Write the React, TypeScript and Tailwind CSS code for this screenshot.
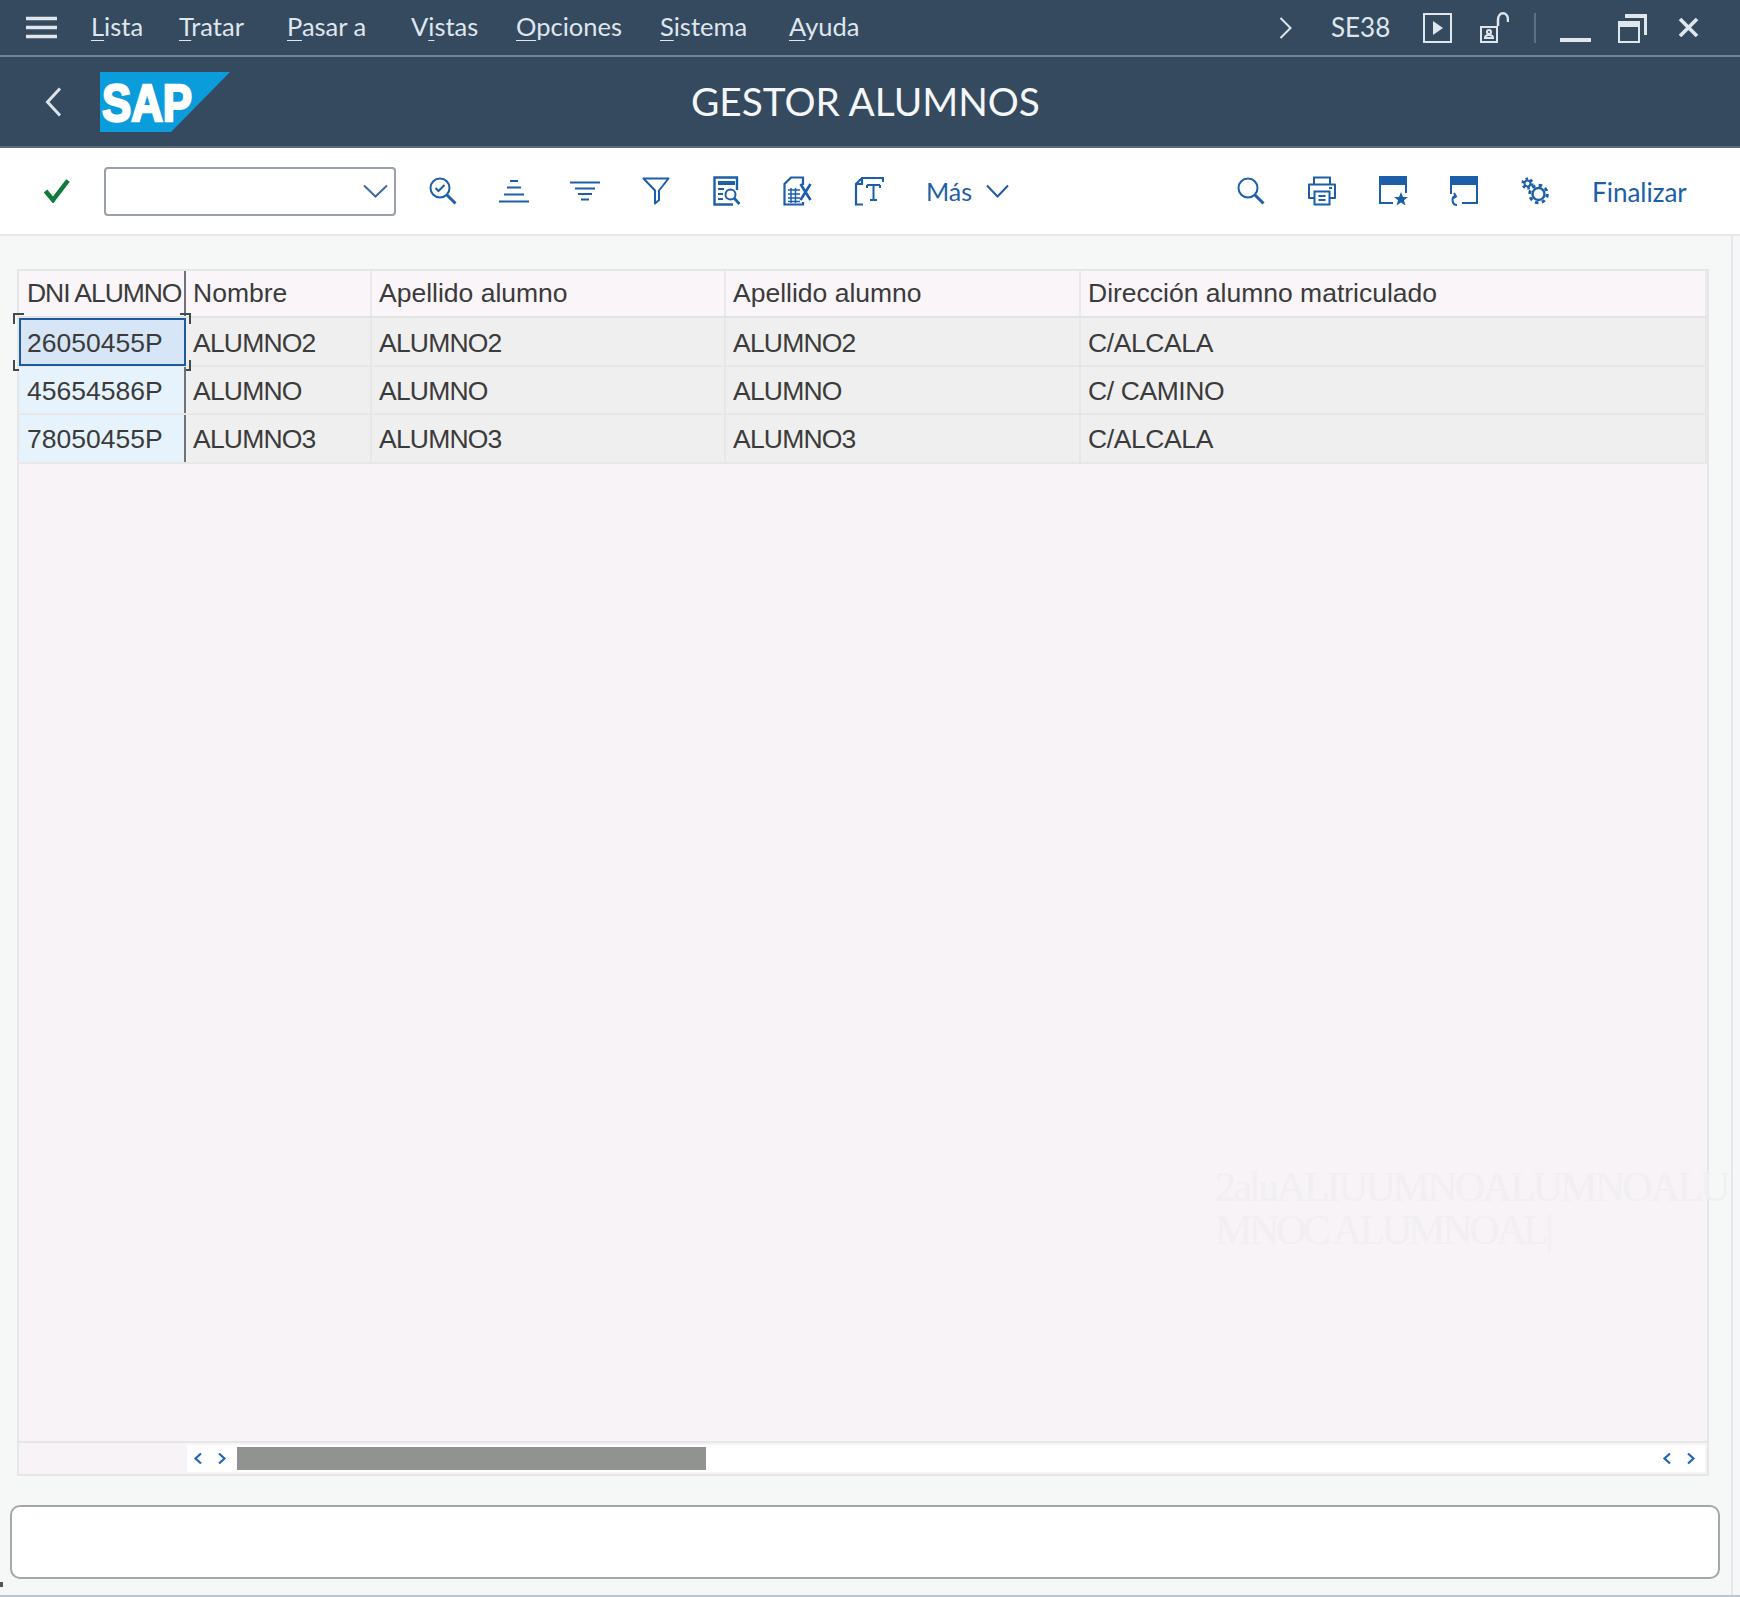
import React from "react";

const sans = "font-[Liberation_Sans,Arial,sans-serif]";
const ui = "font-[Lato,sans-serif]";

function Ico({ w, h, sw = 2, children }: { w: number; h: number; sw?: number; children: React.ReactNode }) {
  return (
    <svg width={w} height={h} viewBox={`0 0 ${w} ${h}`} fill="none" stroke="currentColor" strokeWidth={sw}>
      {children}
    </svg>
  );
}

const toolIcons: React.ReactNode[] = [
  <Ico w={28} h={28} key="a">
    <circle cx="11" cy="11" r="9.5" />
    <path d="M6.5 11l3 3 6-6" />
    <path d="M18 18l8.5 8.5" strokeWidth="3" />
  </Ico>,
  <Ico w={30} h={24} key="b">
    <path d="M11 2h8M8 8.500h14M5 15.500h20M0 22.500h30" />
  </Ico>,
  <Ico w={30} h={20} key="c">
    <path d="M0 1.500h30M5 7.500h20M8 13h14M11 18.500h8" />
  </Ico>,
  <Ico w={28} h={28} key="d">
    <path d="M1.500 1.500h25L17 13.500V23l-4 3.500v-13z" strokeLinejoin="round" />
  </Ico>,
  <Ico w={28} h={30} key="e">
    <path d="M24 14V1.500H1.500v27H20" strokeWidth="2.400" />
    <path d="M5 7h17" strokeWidth="4" />
    <path d="M5 13h6M5 18h5M5 23h5" />
    <circle cx="17.500" cy="18.500" r="5" />
    <path d="M21 22l5.500 6" strokeWidth="2.600" />
  </Ico>,
  <Ico w={29} h={30} key="f">
    <path d="M20 9V1.500H8L1.500 8v20.500H20V26" strokeWidth="2.200" />
    <path d="M5 14h12M5 18h12M5 22h12M5 25.500h12M8 12v15M12.500 12v15" strokeWidth="1.500" />
    <path d="M17.500 8l10 16M27.500 8l-10 16" strokeWidth="2.600" />
  </Ico>,
  <Ico w={30} h={30} key="g">
    <path d="M8 2v6H2M29 6V2H8L2 8v20.500h7" strokeWidth="2.200" />
    <path d="M13 9h13M19.500 9v15M16 24h7M13 9v3M26 9v3" />
  </Ico>,
];

const rightIcons: React.ReactNode[] = [
  <Ico w={28} h={28} key="a">
    <circle cx="11" cy="11" r="9.5" />
    <path d="M18 18l8.500 8.500" strokeWidth="3" />
  </Ico>,
  <Ico w={30} h={30} key="b">
    <path d="M7 8V1.500h16V8" />
    <path d="M7 22H2V8.500h26V22h-5" strokeLinejoin="round" />
    <path d="M7.500 15.500h15v13h-15z" />
    <path d="M11.500 20h7M11.500 24h7" />
    <path d="M22 12h3" />
  </Ico>,
  <Ico w={30} h={30} key="c">
    <path d="M2 1h26v7H2z" fill="currentColor" />
    <path d="M2 8v19h13M28 8v9" />
    <path d="M23 16l2 5h5l-4 3.300 1.500 5.200-4.500-3-4.500 3 1.500-5.200-4-3.300h5z" fill="currentColor" stroke="none" />
  </Ico>,
  <Ico w={30} h={30} key="d">
    <path d="M2 1h26v7H2z" fill="currentColor" />
    <path d="M2 8v10M28 8v19H13" />
    <path d="M8 29c-5 0-6-7-2-9M5 17l2 3.500-3 2" />
  </Ico>,
  <Ico w={30} h={28} key="e">
    <circle cx="7.500" cy="6.500" r="3" />
    <circle cx="7.500" cy="6.500" r="4.800" strokeWidth="2.600" strokeDasharray="2.500 2.500" />
    <circle cx="18.500" cy="17" r="6" strokeWidth="2.400" />
    <circle cx="18.500" cy="17" r="8.800" strokeWidth="3" strokeDasharray="3.500 3.400" />
  </Ico>,
];

const menus: [string, string, string, string][] = [
  ["", "L", "ista", "w-[88px]"],
  ["", "T", "ratar", "w-[108px]"],
  ["", "P", "asar a", "w-[124px]"],
  ["V", "i", "stas", "w-[105px]"],
  ["", "O", "pciones", "w-[144px]"],
  ["", "S", "istema", "w-[129px]"],
  ["", "A", "yuda", "w-[80px]"],
];

const rows = [
  ["26050455P", "ALUMNO2", "ALUMNO2", "ALUMNO2", "C/ALCALA"],
  ["45654586P", "ALUMNO", "ALUMNO", "ALUMNO", "C/ CAMINO"],
  ["78050455P", "ALUMNO3", "ALUMNO3", "ALUMNO3", "C/ALCALA"],
];
const headers = ["DNI ALUMNO", "Nombre", "Apellido alumno", "Apellido alumno", "Dirección alumno matriculado"];
const cols = "grid grid-cols-[167px_186px_354px_355px_1fr]";

function Marks() {
  const base = "absolute w-[11px] h-[11px] border-[#3f4a55]";
  return (
    <>
      <span className={`${base} -left-[8px] -top-[7px] border-l-2 border-t-2`} />
      <span className={`${base} -right-[7px] -top-[7px] border-r-2 border-t-2`} />
      <span className={`${base} -left-[8px] -bottom-[7px] border-l-2 border-b-2`} />
      <span className={`${base} -right-[7px] -bottom-[7px] border-r-2 border-b-2`} />
    </>
  );
}

function Arrow({ dir }: { dir: "l" | "r" }) {
  return (
    <span className="flex h-[23px] w-[22px] items-center justify-center bg-white text-[#1f66b5]">
      <Ico w={10} h={13} sw={2.200}>
        <path d={dir === "l" ? "M8 1.500L2.500 6.500 8 11.500" : "M2 1.500l5.500 5L2 11.500"} />
      </Ico>
    </span>
  );
}

export default function App() {
  return (
    <div className={`${sans} relative flex h-[1597px] w-[1740px] flex-col overflow-hidden bg-[#f6f7f7]`}>
      {/* menu bar */}
      <div className="flex h-[57px] shrink-0 items-center border-b-2 border-[#6e8299] bg-[#354a5f] pl-[26px] text-[25.500px] text-[#dfe6ee]">
        <Ico w={31} h={23} sw={3.500}>
          <path d="M0 2.500h31M0 11.500h31M0 20.500h31" />
        </Ico>
        <div className={`ml-[34px] flex pb-[3px] ${ui}`}>
          {menus.map(([pre, u, post, w]) => (
            <span key={u + post} className={w}>
              {pre}
              <span className="underline underline-offset-4 decoration-1">{u}</span>
              {post}
            </span>
          ))}
        </div>
        <div className="ml-auto flex items-center pr-[41px]">
          <Ico w={13} h={22}>
            <path d="M1.500 1l10 10-10 10" />
          </Ico>
          <span className={`ml-[39px] w-[62px] text-[26px] ${ui}`}>SE38</span>
          <span className="ml-[30px]">
            <Ico w={29} h={30}>
              <path d="M1 1h27v28H1z" />
              <path d="M10 8l10 7-10 7z" fill="currentColor" stroke="none" />
            </Ico>
          </span>
          <span className="ml-[27px]">
            <Ico w={30} h={31}>
              <path d="M2 15h16v15H2z" />
              <path d="M19 14V8c0-9 10-9 10 0v2" strokeWidth="2.500" />
              <circle cx="10" cy="20" r="2" />
              <path d="M6 26c0-4 8-4 8 0z" />
            </Ico>
          </span>
          <span className="ml-[25px] h-[30px] w-[2px] bg-[#5d7186]" />
          <span className="ml-[24px] mt-[25px]">
            <Ico w={31} h={4} sw={4}>
              <path d="M0 2h31" />
            </Ico>
          </span>
          <span className="ml-[27px]">
            <Ico w={29} h={30}>
              <path d="M1 9h20v20H1z" />
              <path d="M1 12h20" strokeWidth="4" />
              <path d="M7 3h21v19" strokeWidth="4" />
            </Ico>
          </span>
          <span className="ml-[31px]">
            <Ico w={21} h={19} sw={3.600}>
              <path d="M2 1l17 17M19 1L2 18" />
            </Ico>
          </span>
        </div>
      </div>

      {/* title bar */}
      <div className="relative flex h-[91px] shrink-0 items-center border-b-2 border-[#5e6a76] bg-[#354a5f] pl-[45px]">
        <span className="text-[#dbe3ec]">
          <Ico w={17} h={30} sw={3}>
            <path d="M15 1.500L2.500 15 15 28.500" />
          </Ico>
        </span>
        <svg width="130" height="60" viewBox="0 0 130 60" className="ml-[38px]">
          <path d="M0 0h130L71 60H0z" fill="#0b9cdc" />
          <text
            x="2"
            y="49"
            fontFamily="'Liberation Sans',Arial,sans-serif"
            fontWeight="700"
            fontSize="51"
            fill="#fff"
            stroke="#fff"
            strokeWidth="2.500"
            textLength="90"
            lengthAdjust="spacingAndGlyphs"
          >
            SAP
          </text>
        </svg>
        <span className={`ml-[461px] whitespace-nowrap ${ui} text-[38.800px] text-[#f4f6f8]`}>
          GESTOR ALUMNOS
        </span>
      </div>

      {/* toolbar */}
      <div className="flex h-[88px] shrink-0 items-center border-b-2 border-[#e7e8e9] bg-white pl-[44px] pr-[53px] text-[#1c5fa8]">
        <span className="text-[#0e7a3c]">
          <Ico w={26} h={24} sw={4.500}>
            <path d="M1.500 12l7.500 9L24 1.500" />
          </Ico>
        </span>
        <div className="ml-[34px] flex h-[49px] w-[292px] items-center justify-end rounded-[4px] border-2 border-[#9aa0a7] bg-white pr-[6px] text-[#3f6d9e]">
          <Ico w={25} h={14}>
            <path d="M1 1.500L12.500 12.500 24 1.500" />
          </Ico>
        </div>
        <div className="ml-[11px] flex">
          {toolIcons.map((icon, i) => (
            <span key={i} className="flex h-[48px] w-[71px] items-center justify-center">
              {icon}
            </span>
          ))}
        </div>
        <span className={`ml-[22px] w-[48px] pt-[2px] ${ui} text-[25px]`}>Más</span>
        <span className="ml-[12px]">
          <Ico w={23} h={14}>
            <path d="M1 1.500l10.500 11 10.500-11" />
          </Ico>
        </span>
        <div className="ml-auto flex items-center">
          {rightIcons.map((icon, i) => (
            <span key={i} className="flex h-[48px] w-[71px] items-center justify-center">
              {icon}
            </span>
          ))}
          <span className={`ml-[22px] w-[95px] whitespace-nowrap pt-[2px] ${ui} text-[26px]`}>Finalizar</span>
        </div>
      </div>

      {/* content */}
      <div className="flex flex-1 flex-col border-b-2 border-[#b8c6d6]">
        <div className="flex h-full w-[1733px] flex-col border-r-2 border-[#e3e8ef] pl-[17px] pt-[33px]">
          <div className="relative flex h-[1207px] w-[1692px] flex-col border-2 border-[#e6e6e8] bg-[#f7f3f7] text-[26.500px] text-[#3b3b3b]">
            <div className={`${cols} h-[47px] border-b-2 border-[#e3e3e3] bg-[#f9f5f8]`}>
              {headers.map((h, i) => (
                <div
                  key={i}
                  className={`flex items-center whitespace-nowrap pl-[7px] pt-[1px] ${
                    i === 0
                      ? "border-r-2 border-[#6f7378] pl-[8px] tracking-[-1.050px]"
                      : "border-r-2 border-[#ece9ec]"
                  }`}
                >
                  {h}
                </div>
              ))}
            </div>
            {rows.map((r, ri) => (
              <div key={ri} className={`${cols} h-[48.500px] border-b-2 border-[#e7e7e7] bg-[#efefef]`}>
                {r.map((c, ci) => (
                  <div
                    key={ci}
                    className={`relative flex items-center whitespace-nowrap pt-[4px] ${
                      ci === 0
                        ? ri === 0
                          ? "border-2 border-[#1b5b9e] bg-[#d6e6f6] pl-[6px]"
                          : "border-r-2 border-r-[#6f7378] bg-[#e6f3fd] pl-[8px]"
                        : ci === 4
                          ? "border-r-2 border-[#e7e7e7] pl-[7px] tracking-[-0.4px]"
                          : "border-r-2 border-[#e7e7e7] pl-[7px] tracking-[-0.8px]"
                    }`}
                  >
                    {c}
                    {ci === 0 && ri === 0 ? <Marks /> : null}
                  </div>
                ))}
              </div>
            ))}

            {/* ghost text left on the canvas */}
            <div className="absolute left-[1196px] top-[895px] whitespace-nowrap font-[Liberation_Serif,serif] text-[42px] leading-[43px] text-[#f2eff3]">
              <div className="tracking-[-2.800px]">2aluALIUUMNOALUMNOALU</div>
              <div className="tracking-[-3.400px]">MNOC ALUMNOAL|</div>
            </div>

            <div className="mt-auto flex h-[33px] items-center border-t-2 border-[#e6e6e8] pl-[168px] pr-[2px]">
              <div className="flex h-[27px] flex-1 items-center gap-[2px] bg-white">
                <Arrow dir="l" />
                <Arrow dir="r" />
                <span className="ml-[2px] h-[23px] w-[469px] bg-[#919391]" />
                <span className="ml-auto mr-[3px] flex gap-[2px]">
                  <Arrow dir="l" />
                  <Arrow dir="r" />
                </span>
              </div>
            </div>
          </div>
          <div className="mt-[29px] -ml-[7px] h-[74px] w-[1710px] rounded-[10px] border-2 border-[#a3a8ad] bg-white" />
        </div>
      </div>

      <span className="absolute bottom-[10px] left-0 h-[5px] w-[3px] bg-[#4a5560]" />
    </div>
  );
}
